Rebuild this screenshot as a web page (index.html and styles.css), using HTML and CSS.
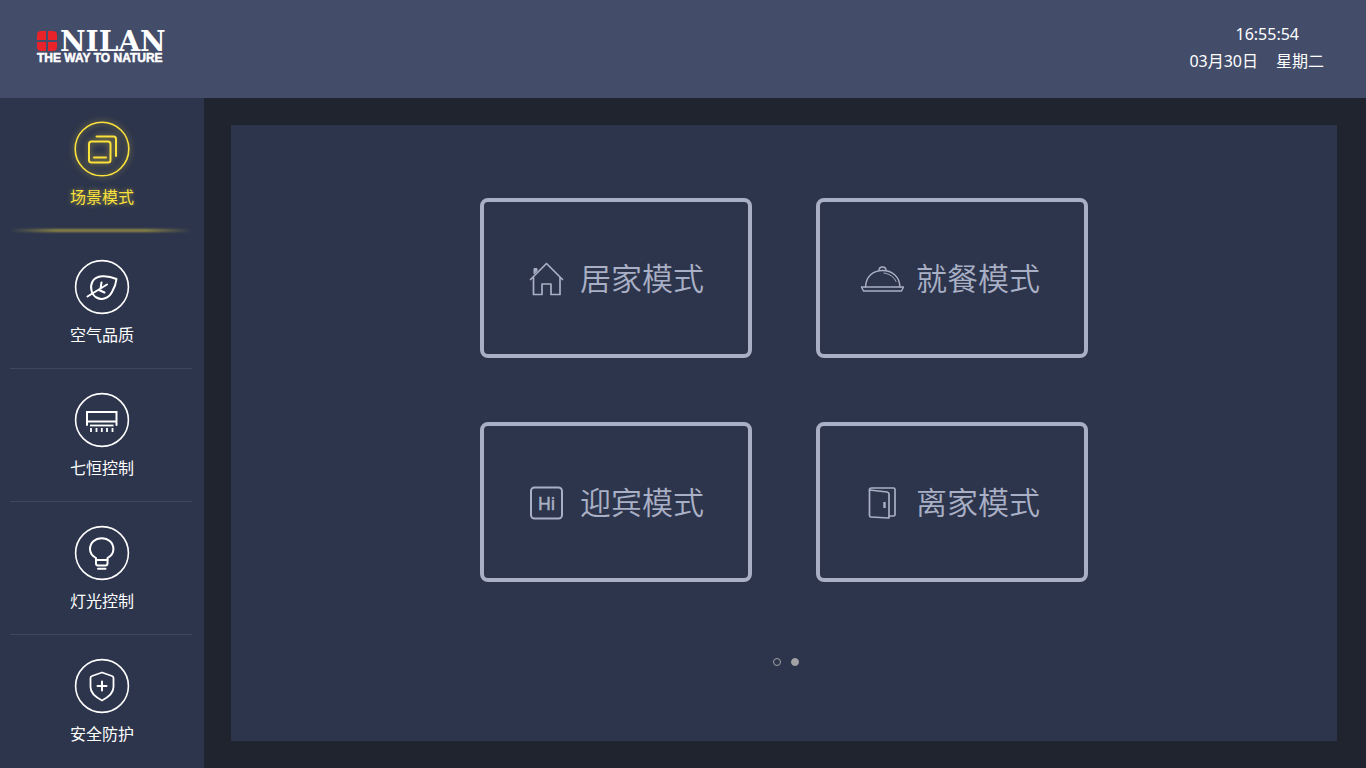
FILE: index.html
```html
<!DOCTYPE html>
<html lang="zh-CN">
<head>
    <meta charset="UTF-8">
    <meta name="viewport" content="width=device-width, initial-scale=1.0">
    <title>NILAN</title>
    <link rel="stylesheet" href="styles.css">
</head>
<body>
    <header class="header">
        <svg class="logo" viewBox="0 0 136 48" role="img" aria-label="NILAN THE WAY TO NATURE">
            <g fill="#e8232a">
                <path d="M5 10h5v9H1v-5q0-4 4-4z"/>
                <path d="M12 10h5q4 0 4 4v5h-9z"/>
                <path d="M1 21h9v9H5q-4 0-4-4z"/>
                <path d="M12 21h9v5q0 4-4 4h-5z"/>
            </g>
            <text class="logo-name" x="24" y="30">NILAN</text>
            <text class="logo-tag" x="1" y="41">THE WAY TO NATURE</text>
        </svg>
        <div class="clock">
            <div class="time">16:55:54</div>
            <div class="date"><span>03月30日</span><span>星期二</span></div>
        </div>
    </header>

    <div class="content">
        <nav class="sidebar">
            <a class="nav-item active" href="#scene">
                <svg class="nav-icon" viewBox="0 0 56 56">
                    <circle cx="28" cy="28" r="26.8" stroke-width="1.6"/>
                    <rect x="15" y="20.5" width="21.5" height="21" rx="2.5"/>
                    <path d="M22.500 15.500h17q2.500 0 2.500 2.500v17M20 36.500h12"/>
                </svg>
                <span>场景模式</span>
            </a>
            <a class="nav-item" href="#air">
                <svg class="nav-icon" viewBox="0 0 56 56">
                    <circle cx="28" cy="28" r="26.400" stroke-width="1.6"/>
                    <path d="M42.500 20C33 16 22 16 18.500 22.500C15.500 28 17.500 36 22.500 38.500C28 41.500 34.500 39.500 38 33C40 29.500 42 25 42.500 20z"/>
                    <path d="M13.500 37.500L33 25.500M27.500 23.500L26.500 29.500M25 31L30.500 33.500"/>
                </svg>
                <span>空气品质</span>
            </a>
            <a class="nav-item" href="#climate">
                <svg class="nav-icon" viewBox="0 0 56 56">
                    <circle cx="28" cy="28" r="26.400" stroke-width="1.6"/>
                    <path d="M13 33V20h29.500v13M13 29.500h29.500" stroke-linejoin="miter"/>
                    <path d="M16 33.500h23.500" stroke-width="1.8" stroke-linecap="butt"/>
                    <path d="M17 36v4M22.500 36v4M27.800 36v4M33 36v4M38.500 36v4" stroke-width="1.8" stroke-linecap="butt"/>
                </svg>
                <span>七恒控制</span>
            </a>
            <a class="nav-item" href="#light">
                <svg class="nav-icon" viewBox="0 0 56 56">
                    <circle cx="28" cy="28" r="26.400" stroke-width="1.6"/>
                    <path d="M22 35V33C18.500 31 16 28 16 24.300C16 17.800 21 13.200 27.700 13.200S39.400 17.800 39.400 24.300C39.400 28 37 31 33.500 33V35z"/>
                    <path d="M22 35v3.500q0 2 2 2h7.500q2 0 2-2V35M24 43.800h7.500"/>
                </svg>
                <span>灯光控制</span>
            </a>
            <a class="nav-item" href="#security">
                <svg class="nav-icon" viewBox="0 0 56 56">
                    <circle cx="28" cy="28" r="26.400" stroke-width="1.6"/>
                    <path d="M28 14.500L38 18Q39.500 18.500 39.500 20V29C39.500 35 35.500 38.500 28 42.500C20.500 38.500 16.500 35 16.500 29V20Q16.500 18.500 18 18z" stroke-width="1.800"/>
                    <path d="M28 23.500v9M23.500 28h9"/>
                </svg>
                <span>安全防护</span>
            </a>
        </nav>

        <main class="main">
            <section class="panel">
                <div class="mode-grid">
                    <button class="mode" type="button">
                        <svg class="mode-icon" viewBox="0 0 44 44">
                            <path d="M6.500 23.500L22.500 7.500L38.500 23.500M9.500 21.500V38.500H18V28H27V38.500H36V21.500" stroke-width="1.700"/>
                            <path d="M10 17.500v-5h3v2z" fill="currentColor" stroke-width="1"/>
                        </svg>
                        <span>居家模式</span>
                    </button>
                    <button class="mode" type="button">
                        <svg class="mode-icon" viewBox="0 0 44 44">
                            <g stroke-width="1.400">
                                <path d="M5.500 31C6 20.500 13 14.500 22.500 14.500S39.500 20.500 40 31"/>
                                <path d="M19 14.500C19 12 20.500 11 22.500 11S26 12 26 14.500"/>
                                <path d="M1.500 31h42l-2 4h-38z"/>
                                <path d="M24 17C30 18 34 21 36 25.500" stroke-width="1"/>
                            </g>
                        </svg>
                        <span>就餐模式</span>
                    </button>
                    <button class="mode" type="button">
                        <svg class="mode-icon" viewBox="0 0 44 44">
                            <rect x="7" y="7.500" width="31" height="31" rx="3.500"/>
                            <text class="hi" x="22.500" y="29.500">Hi</text>
                        </svg>
                        <span>迎宾模式</span>
                    </button>
                    <button class="mode" type="button">
                        <svg class="mode-icon" viewBox="0 0 44 44">
                            <g stroke-width="1.700">
                                <path d="M9.500 10L27 12Q29 12.500 29 14V38L11 37Q9.500 37 9.500 35.500z"/>
                                <path d="M9.500 10Q9.500 8 11.500 8H33.500Q35 8 35 9.500V34.500Q35 36 33.500 36H29"/>
                            </g>
                            <path d="M24.500 22v6" stroke-width="2.400" stroke-linecap="butt"/>
                        </svg>
                        <span>离家模式</span>
                    </button>
                </div>
                <div class="pager">
                    <button class="dot" type="button" aria-label="1"></button>
                    <button class="dot current" type="button" aria-label="2"></button>
                </div>
            </section>
        </main>
    </div>
</body>
</html>
```
FILE: styles.css
```css
* {
    box-sizing: border-box;
}
body {
    margin: 0;
    min-height: 100vh;
    display: flex;
    flex-direction: column;
    background: #20242f;
    color: #fff;
    font-family: "Noto Sans", "Noto Sans CJK SC", sans-serif;
    font-size: 16px;
}
.header {
    display: flex;
    justify-content: space-between;
    align-items: flex-start;
    height: 98px;
    padding: 21px 42px 0 36px;
    background: #434d6a;
}
.logo {
    width: 136px;
    height: 48px;
    overflow: visible;
}
.logo-name {
    font-family: "DejaVu Serif", serif;
    font-size: 28px;
    font-weight: bold;
    fill: #fff;
}
.logo-tag {
    font-family: "Liberation Sans", Arial, sans-serif;
    font-size: 12px;
    font-weight: bold;
    fill: #fff;
    stroke: #fff;
    stroke-width: 0.5px;
}
.clock {
    line-height: 27px;
}
.time {
    padding-right: 25px;
    text-align: right;
}
.date {
    display: flex;
    gap: 18px;
}
.content {
    flex: 1;
    display: flex;
}

/* left menu */
.sidebar {
    width: 204px;
    flex-shrink: 0;
    padding: 0 12px 0 10px;
    background: #2d354c;
}
.nav-item {
    position: relative;
    display: flex;
    flex-direction: column;
    align-items: center;
    gap: 8px;
    height: 133px;
    padding: 23px 0 0 2px;
    border-bottom: 1px solid #3e4560;
    color: #fff;
    line-height: 24px;
    text-decoration: none;
}
.nav-item:last-child {
    border-bottom: none;
}
.nav-icon {
    width: 56px;
    height: 56px;
    fill: none;
    stroke: currentColor;
    stroke-width: 2;
    stroke-linecap: round;
    stroke-linejoin: round;
}
.nav-item.active {
    height: 138px;
    border-bottom: none;
    color: #fbe13c;
    text-shadow: 0 0 5px rgba(251, 225, 60, 0.5);
}
.nav-item.active .nav-icon {
    overflow: visible;
    filter: drop-shadow(0 0 3px rgba(251, 225, 60, 0.6));
}
.nav-item.active::after {
    content: "";
    position: absolute;
    left: 0;
    right: 0;
    bottom: 4px;
    height: 3px;
    background: linear-gradient(90deg, transparent, #918a45 25%, #918a45 75%, transparent);
    filter: blur(1px);
}

/* scene modes */
.main {
    flex: 1;
    display: flex;
    padding: 27px 29px 27px 27px;
}
.panel {
    flex: 1;
    display: flex;
    flex-direction: column;
    align-items: center;
    padding: 73px 20px 20px;
    background: #2d354c;
}
.mode-grid {
    display: grid;
    grid-template-columns: repeat(2, 272px);
    gap: 64px;
}
.mode {
    display: flex;
    align-items: center;
    gap: 12px;
    height: 160px;
    padding: 0 0 0 40px;
    background: none;
    border: 4px solid #a9b0c5;
    border-radius: 8px;
    color: #a9b0c5;
    font-family: inherit;
    font-size: 31px;
    white-space: nowrap;
    cursor: pointer;
}
.mode span {
    padding-bottom: 3px;
    font-weight: 350;
}
.mode-icon {
    width: 44px;
    height: 44px;
    flex-shrink: 0;
    fill: none;
    stroke: currentColor;
    stroke-width: 2;
    stroke-linecap: round;
    stroke-linejoin: round;
}
.hi {
    font-family: Roboto, sans-serif;
    font-size: 18px;
    font-weight: 400;
    text-anchor: middle;
    fill: currentColor;
    stroke-width: 0.4px;
}
.pager {
    display: flex;
    gap: 10px;
    margin-top: 76px;
    padding-left: 4px;
}
.dot {
    width: 8px;
    height: 8px;
    padding: 0;
    background: none;
    border: 1px solid #a3a3a6;
    border-radius: 50%;
    cursor: pointer;
}
.dot.current {
    background: #a3a3a6;
}
```
